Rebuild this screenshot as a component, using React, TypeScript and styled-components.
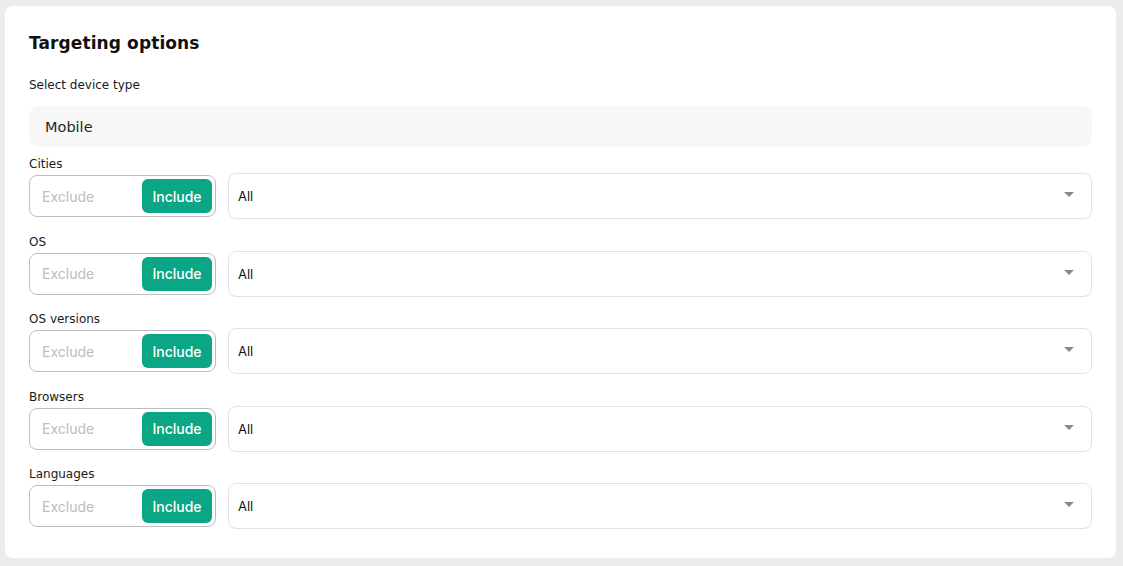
import React from "react";
import styled, { createGlobalStyle } from "styled-components";

const GlobalStyle = createGlobalStyle`
  html, body {
    margin: 0;
    padding: 0;
    background: #ececec;
  }
  body {
    font-family: "Inter", "DejaVu Sans", sans-serif;
  }
`;

const filters = ["Cities", "OS", "OS versions", "Browsers", "Languages"];

const FilterRow = ({ label }: { label: string }) => {
  return (
    <S.Group>
      <S.Label>{label}</S.Label>
      <S.Row>
        <S.Toggle>
          <S.ToggleOption>Exclude</S.ToggleOption>
          <S.ToggleOption active>Include</S.ToggleOption>
        </S.Toggle>
        <S.Select>
          All
          <S.Arrow />
        </S.Select>
      </S.Row>
    </S.Group>
  );
};

const App = () => {
  return (
    <S.Page>
      <GlobalStyle />
      <S.Card>
        <S.Title>Targeting options</S.Title>
        <S.DeviceLabel>Select device type</S.DeviceLabel>
        <S.Device>Mobile</S.Device>
        <S.List>
          {filters.map((f) => (
            <FilterRow key={f} label={f} />
          ))}
        </S.List>
      </S.Card>
    </S.Page>
  );
};

export default App;

const S = {
  Page: styled.div`
    padding: 6px 7px 8px 5px;
    height: 566px;
    box-sizing: border-box;
  `,
  Card: styled.div`
    background: #fff;
    border-radius: 8px;
    padding: 27px 24px 31px 24px;
    height: 552px;
    box-sizing: border-box;
  `,
  Title: styled.h2`
    margin: 0;
    font-family: "DejaVu Sans", sans-serif;
    font-size: 17px;
    font-weight: 700;
    line-height: 20px;
    color: #111;
    letter-spacing: 0.1px;
  `,
  DeviceLabel: styled.div`
    margin-top: 24px;
    font-family: "DejaVu Sans", sans-serif;
    font-size: 12px;
    line-height: 16px;
    color: #1a1a1a;
  `,
  Device: styled.div`
    margin-top: 13px;
    height: 41px;
    background: #f7f7f7;
    border-radius: 10px;
    display: flex;
    align-items: center;
    padding-left: 16px;
    font-family: "DejaVu Sans", sans-serif;
    font-size: 14.5px;
    color: #1b2a1b;
  `,
  List: styled.div`
    margin-top: 9px;
    display: flex;
    flex-direction: column;
    gap: 14.5px;
  `,
  Group: styled.div`
    display: flex;
    flex-direction: column;
    gap: 1px;
  `,
  Label: styled.div`
    font-family: "DejaVu Sans", sans-serif;
    font-size: 12px;
    line-height: 16px;
    color: #1a1a1a;
  `,
  Row: styled.div`
    display: flex;
    align-items: center;
    gap: 12px;
    height: 46px;
  `,
  Toggle: styled.div`
    width: 187px;
    height: 42px;
    box-sizing: border-box;
    border: 1px solid #bdbdbd;
    border-radius: 8px;
    padding: 3px;
    display: flex;
    justify-content: space-between;
    align-items: stretch;
  `,
  ToggleOption: styled.div<{ active?: boolean }>`
    width: 70px;
    border-radius: 6px;
    display: flex;
    align-items: center;
    font-size: 14px;
    background: ${(p) => (p.active ? "#0aa685" : "transparent")};
    color: ${(p) => (p.active ? "#fff" : "#bdbdbd")};
    font-weight: ${(p) => (p.active ? 500 : 400)};
    justify-content: ${(p) => (p.active ? "center" : "flex-start")};
    margin-left: ${(p) => (p.active ? "0" : "9px")};
  `,
  Select: styled.div`
    flex: 1;
    height: 46px;
    box-sizing: border-box;
    border: 1px solid #e2e2e2;
    border-radius: 8px;
    display: flex;
    align-items: center;
    padding: 0 17px 0 9px;
    font-size: 13px;
    color: #111;
  `,
  Arrow: styled.span`
    margin-left: auto;
    margin-top: -3px;
    width: 0;
    height: 0;
    border-left: 5px solid transparent;
    border-right: 5px solid transparent;
    border-top: 5px solid #8a8a8a;
  `,
};
